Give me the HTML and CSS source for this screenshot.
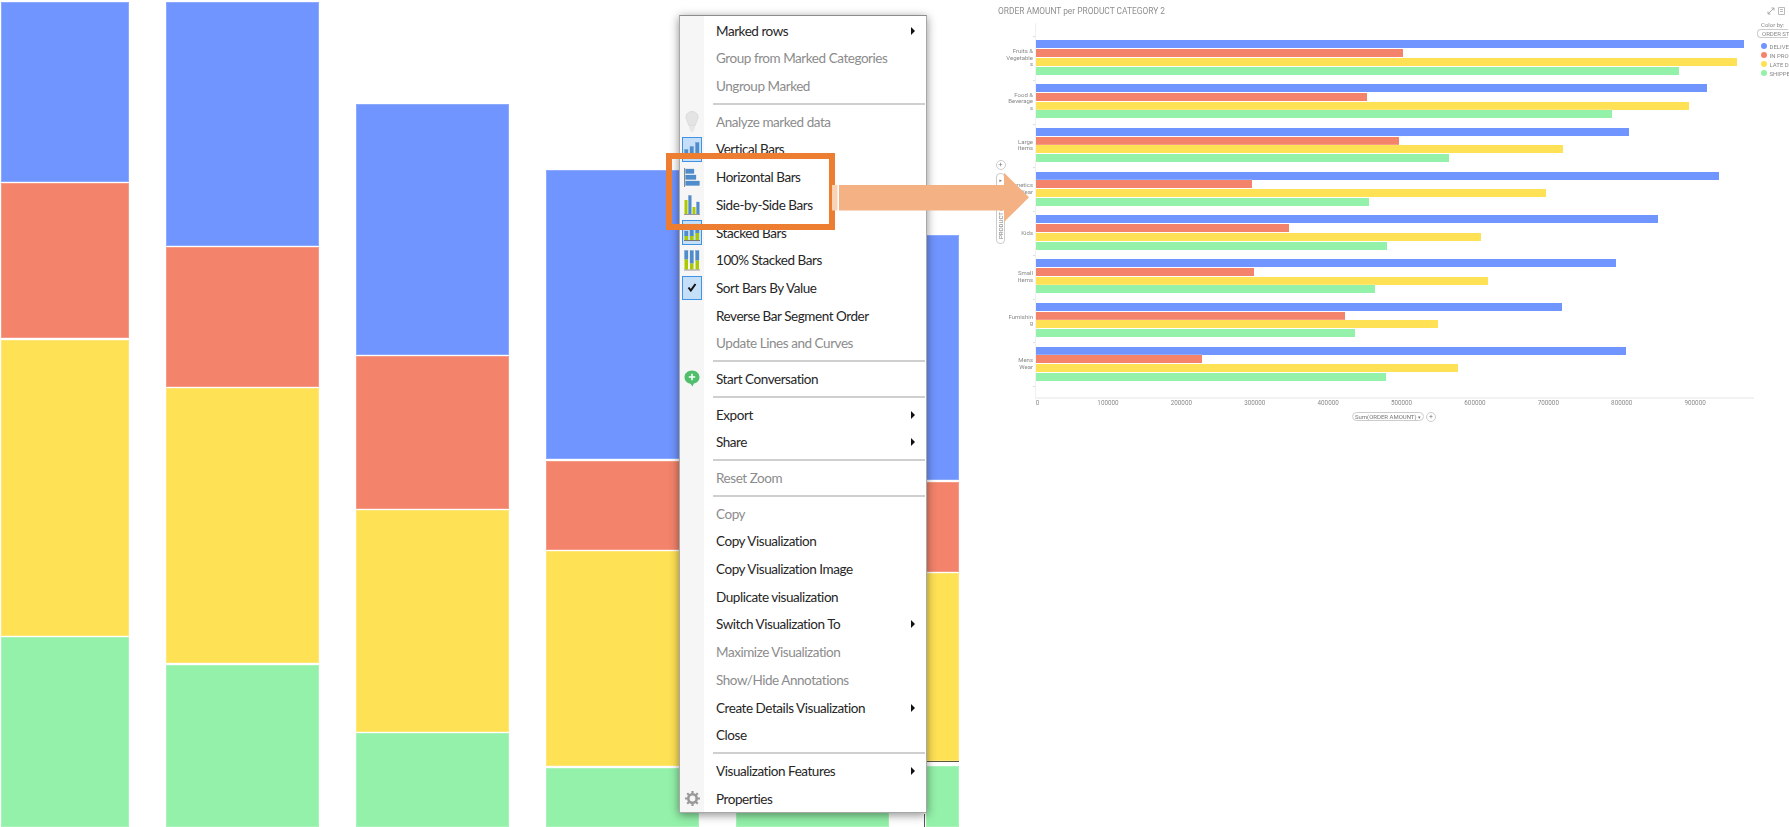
FILE: index.html
```html
<!DOCTYPE html>
<html lang="en">
<head>
  <meta charset="UTF-8" />
  <title>Bar chart menu</title>
  <link rel="stylesheet" href="styles.css">
</head>
<body>

  <div class="page">

    <!-- stacked columns on the left -->
    <div class="columns">
      <div class="col col-1">
        <div class="seg blue" style="height:179.5px"></div>
        <div class="seg red" style="height:155px"></div>
        <div class="seg yellow" style="height:296px"></div>
        <div class="seg green" style="height:189.5px"></div>
      </div>
      <div class="col col-n">
        <div class="seg blue" style="height:243.5px"></div>
        <div class="seg red" style="height:139.5px"></div>
        <div class="seg yellow" style="height:275px"></div>
        <div class="seg green" style="height:162px"></div>
      </div>
      <div class="col col-n">
        <div class="seg blue" style="height:251px"></div>
        <div class="seg red" style="height:152.5px"></div>
        <div class="seg yellow" style="height:221.5px"></div>
        <div class="seg green" style="height:93.5px"></div>
      </div>
      <div class="col col-n">
        <div class="seg blue" style="height:289px"></div>
        <div class="seg red" style="height:89px"></div>
        <div class="seg yellow" style="height:215px"></div>
        <div class="seg green" style="height:59px"></div>
      </div>
      <div class="col col-n">
        <div class="seg yellow" style="height:200px"></div>
        <div class="seg green" style="height:92px"></div>
      </div>
      <div class="col col-last">
        <div class="seg blue" style="height:245px"></div>
        <div class="seg red" style="height:90px"></div>
        <div class="seg yellow seg-marked" style="height:189px"></div>
        <div class="seg green" style="height:61px"></div>
      </div>
    </div>

    <!-- horizontal bars on the right -->
    <div class="chart">
      <div class="chart-head">
        <div class="chart-title">ORDER AMOUNT per PRODUCT CATEGORY 2</div>
        <div class="chart-tools">
          <svg width="8" height="8" viewBox="0 0 8 8"><path d="M1 7 7 1M4.5 1H7V3.5M1 4.5V7H3.5" fill="none" stroke="#aaa" stroke-width="1"/></svg>
          <svg width="7" height="8" viewBox="0 0 7 8"><path d="M.5.5H6.5V7.500H.5ZM2 2.500H5M2 4.500H5" fill="none" stroke="#bbb" stroke-width="1"/></svg>
        </div>
      </div>

      <div class="chart-body">
        <div class="y-control">
          <div class="round-btn">+</div>
          <div class="y-pill"><span>PRODUCT C</span><span class="y-caret">▾</span></div>
        </div>

        <div class="cats">
          <div class="cat">Fruits &amp;<br>Vegetable<br>s</div>
          <div class="cat">Food &amp;<br>Beverage<br>s</div>
          <div class="cat">Large<br>Items</div>
          <div class="cat">Cosmetics<br>Wear</div>
          <div class="cat">Kids</div>
          <div class="cat">Small<br>Items</div>
          <div class="cat">Furnishin<br>g</div>
          <div class="cat">Mens<br>Wear</div>
          <div class="cat-end"></div>
        </div>

        <div class="plot">
          <div class="group">
            <div class="bar blue" style="width:708px"></div>
            <div class="bar red" style="width:367px"></div>
            <div class="bar yellow" style="width:701px"></div>
            <div class="bar green" style="width:643px"></div>
          </div>
          <div class="group">
            <div class="bar blue" style="width:671px"></div>
            <div class="bar red" style="width:331px"></div>
            <div class="bar yellow" style="width:653px"></div>
            <div class="bar green" style="width:576px"></div>
          </div>
          <div class="group">
            <div class="bar blue" style="width:593px"></div>
            <div class="bar red" style="width:363px"></div>
            <div class="bar yellow" style="width:527px"></div>
            <div class="bar green" style="width:413px"></div>
          </div>
          <div class="group">
            <div class="bar blue" style="width:683px"></div>
            <div class="bar red" style="width:216px"></div>
            <div class="bar yellow" style="width:510px"></div>
            <div class="bar green" style="width:333px"></div>
          </div>
          <div class="group">
            <div class="bar blue" style="width:622px"></div>
            <div class="bar red" style="width:253px"></div>
            <div class="bar yellow" style="width:445px"></div>
            <div class="bar green" style="width:351px"></div>
          </div>
          <div class="group">
            <div class="bar blue" style="width:580px"></div>
            <div class="bar red" style="width:218px"></div>
            <div class="bar yellow" style="width:452px"></div>
            <div class="bar green" style="width:339px"></div>
          </div>
          <div class="group">
            <div class="bar blue" style="width:526px"></div>
            <div class="bar red" style="width:309px"></div>
            <div class="bar yellow" style="width:402px"></div>
            <div class="bar green" style="width:319px"></div>
          </div>
          <div class="group">
            <div class="bar blue" style="width:590px"></div>
            <div class="bar red" style="width:166px"></div>
            <div class="bar yellow" style="width:422px"></div>
            <div class="bar green" style="width:350px"></div>
          </div>
        </div>

        <div class="legend">
          <div class="legend-title">Color by:</div>
          <div class="legend-pill">ORDER ST.</div>
          <div class="legend-list">
            <div class="legend-item"><span class="dot blue"></span>DELIVE</div>
            <div class="legend-item"><span class="dot red"></span>IN PRO</div>
            <div class="legend-item"><span class="dot yellow"></span>LATE D</div>
            <div class="legend-item"><span class="dot green"></span>SHIPPE</div>
          </div>
        </div>
      </div>

      <div class="x-ticks">
        <span class="tick-zero">0</span><span>100000</span><span>200000</span><span>300000</span><span>400000</span><span>500000</span><span>600000</span><span>700000</span><span>800000</span><span>900000</span>
      </div>
      <div class="x-control">
        <div class="x-pill">Sum(ORDER AMOUNT) <span class="x-caret">▾</span></div>
        <div class="round-btn">+</div>
      </div>
    </div>
  </div>

  <!-- context menu -->
  <div class="menu">
    <div class="item"><span class="slot"></span><span class="label">Marked rows</span><span class="more"></span></div>
    <div class="item off"><span class="slot"></span><span class="label">Group from Marked Categories</span></div>
    <div class="item off"><span class="slot"></span><span class="label">Ungroup Marked</span></div>
    <div class="sep"></div>
    <div class="item off">
      <span class="slot">
        <svg width="14" height="21" viewBox="0 0 14 21"><path d="M7 .5C3.200.5 1 3.200 1 6.200c0 3 2.200 4.800 2.800 8.300h6.400C10.800 11 13 9.200 13 6.200 13 3.200 10.800.5 7 .5Z" fill="#e4e4e4" stroke="#dcdcdc"/><path d="M4 16h6M4.500 18h5M5.500 20h3" stroke="#d8d8d8" stroke-width="1.200"/></svg>
      </span>
      <span class="label">Analyze marked data</span>
    </div>
    <div class="item">
      <span class="slot"><span class="picked">
        <svg width="16" height="14" viewBox="0 0 16 14"><g class="ic-blue"><rect x=".5" y="7.500" width="3.500" height="6"/><rect x="6" y="4.500" width="3.500" height="9"/><rect x="11.500" y=".5" width="3.500" height="13"/></g></svg>
      </span></span>
      <span class="label">Vertical Bars</span>
    </div>
    <div class="item">
      <span class="slot">
        <svg width="16" height="19" viewBox="0 0 16 19"><path d="M.5 0V19" stroke="#8a8a8a" stroke-width="1"/><g class="ic-blue"><rect x="1.500" y="1" width="8.500" height="4.500"/><rect x="1.500" y="7" width="10.500" height="4.500"/><rect x="1.500" y="13" width="14" height="4.500"/></g></svg>
      </span>
      <span class="label">Horizontal Bars</span>
    </div>
    <div class="item">
      <span class="slot">
        <svg width="16" height="20" viewBox="0 0 16 20"><rect class="ic-lime-bar" x=".5" y="5" width="3" height="14"/><g class="ic-blue"><rect x="4.500" y=".5" width="2.800" height="18.500"/><rect x="12.500" y="7" width="2.800" height="12"/></g><rect class="ic-lime-bar" x="8.500" y="12" width="3" height="7"/><path d="M0 19.500H16" stroke="#999" stroke-width="1"/></svg>
      </span>
      <span class="label">Side-by-Side Bars</span>
    </div>
    <div class="item">
      <span class="slot"><span class="picked">
        <svg width="16" height="16" viewBox="0 0 16 16"><g class="ic-blue"><rect x=".5" y="6" width="3.500" height="5"/><rect x="6" y="4" width="3.500" height="7"/><rect x="11.500" y="1" width="3.500" height="7"/></g><g class="ic-lime"><rect x=".5" y="11" width="3.500" height="4"/><rect x="6" y="11" width="3.500" height="4"/><rect x="11.500" y="8" width="3.500" height="7"/></g><path d="M0 15.500H16" stroke="#777" stroke-width="1"/></svg>
      </span></span>
      <span class="label">Stacked Bars</span>
    </div>
    <div class="item">
      <span class="slot">
        <svg width="16" height="21" viewBox="0 0 16 21"><g class="ic-blue"><rect x=".5" y=".5" width="3.500" height="9"/><rect x="6" y=".5" width="3.500" height="13"/><rect x="11.500" y=".5" width="3.500" height="10"/></g><g class="ic-lime"><rect x=".5" y="9.500" width="3.500" height="10"/><rect x="6" y="13.500" width="3.500" height="6"/><rect x="11.500" y="10.500" width="3.500" height="9"/></g><path d="M0 20H16" stroke="#999" stroke-width="1"/></svg>
      </span>
      <span class="label">100% Stacked Bars</span>
    </div>
    <div class="item">
      <span class="slot"><span class="picked">
        <svg width="10" height="9" viewBox="0 0 10 9"><path d="M1.500 4.500 3.800 7.500 8.500 1" fill="none" stroke="#111" stroke-width="2"/></svg>
      </span></span>
      <span class="label">Sort Bars By Value</span>
    </div>
    <div class="item"><span class="slot"></span><span class="label">Reverse Bar Segment Order</span></div>
    <div class="item off"><span class="slot"></span><span class="label">Update Lines and Curves</span></div>
    <div class="sep"></div>
    <div class="item">
      <span class="slot">
        <svg width="16" height="17" viewBox="0 0 16 17"><path d="M8 .5C3.800.5.500 3.300.5 7.200c0 3.600 2.900 6.200 6 6.500L8.500 16.500l1.300-3C13 12.900 15.500 10.500 15.500 7.200 15.500 3.300 12.200.5 8 .5Z" fill="#4fbf6b"/><path d="M8 3.800V10.200M4.800 7H11.200" stroke="#fff" stroke-width="1.500"/></svg>
      </span>
      <span class="label">Start Conversation</span>
    </div>
    <div class="sep"></div>
    <div class="item"><span class="slot"></span><span class="label">Export</span><span class="more"></span></div>
    <div class="item"><span class="slot"></span><span class="label">Share</span><span class="more"></span></div>
    <div class="sep"></div>
    <div class="item off"><span class="slot"></span><span class="label">Reset Zoom</span></div>
    <div class="sep"></div>
    <div class="item off"><span class="slot"></span><span class="label">Copy</span></div>
    <div class="item"><span class="slot"></span><span class="label">Copy Visualization</span></div>
    <div class="item"><span class="slot"></span><span class="label">Copy Visualization Image</span></div>
    <div class="item"><span class="slot"></span><span class="label">Duplicate visualization</span></div>
    <div class="item"><span class="slot"></span><span class="label">Switch Visualization To</span><span class="more"></span></div>
    <div class="item off"><span class="slot"></span><span class="label">Maximize Visualization</span></div>
    <div class="item off"><span class="slot"></span><span class="label">Show/Hide Annotations</span></div>
    <div class="item"><span class="slot"></span><span class="label">Create Details Visualization</span><span class="more"></span></div>
    <div class="item"><span class="slot"></span><span class="label">Close</span></div>
    <div class="sep"></div>
    <div class="item"><span class="slot"></span><span class="label">Visualization Features</span><span class="more"></span></div>
    <div class="item">
      <span class="slot">
        <svg width="15" height="15" viewBox="0 0 15 15"><circle cx="7.500" cy="7.500" r="4.200" fill="none" stroke="#999" stroke-width="2.600"/><path d="M7.500 0V3M7.500 12V15M0 7.500H3M12 7.500H15M2.200 2.200 4.300 4.300M10.700 10.700 12.800 12.800M2.200 12.800 4.300 10.700M10.700 4.300 12.800 2.200" stroke="#999" stroke-width="2.200"/></svg>
      </span>
      <span class="label">Properties</span>
    </div>
  </div>

  <!-- callout on top -->
  <div class="callout-box"></div>
  <svg class="callout-arrow" width="198" height="51" viewBox="0 0 198 51">
    <rect x="0" y="13" width="5.500" height="25.500" fill="#f9d3b6"/>
    <path d="M7 13H172V.7L197 25.300 172 50V38.500H7Z" fill="#f4b183"/>
  </svg>

</body>
</html>
```

FILE: styles.css
```css
body {
  margin: 0;
  background-color: #ffffff;
  font-family: 'Roboto', sans-serif;
}
.page {
  display: flex;
  width: 1789px;
  height: 827px;
  overflow: hidden;
}

.blue { background-color: #7095ff; }
.red { background-color: #f3836a; }
.yellow { background-color: #ffe155; }
.green { background-color: #93f1a9; }

/* stacked columns */
.columns {
  display: flex;
  align-items: flex-end;
  gap: 37px;
  width: 959px;
  height: 826.500px;
  padding-left: 1px;
  box-sizing: border-box;
}
.col {
  display: flex;
  flex-direction: column;
  gap: 1.500px;
  flex: none;
  position: relative;
}
.col-1 { width: 128px; }
.col-n { width: 153px; }
.col-last { width: 33px; }
.col-last::before {
  content: "";
  position: absolute;
  left: -2px;
  bottom: 0;
  width: 1px;
  height: 13px;
  background-color: #555;
}
.seg { box-shadow: inset 0 0 0 1px rgba(255, 255, 255, 0.2); }
.seg-marked {
  margin-bottom: 2px;
  border-bottom: 1.500px solid #5a5a40;
  box-sizing: border-box;
}

/* right chart */
.chart {
  flex: 1;
  min-width: 0;
  color: #8a8a8a;
  filter: blur(0.35px);
}
.chart-head {
  display: flex;
  justify-content: space-between;
  align-items: center;
  height: 21px;
  padding: 0 4px 0 39px;
}
.chart-title {
  font-size: 8.400px;
  color: #8f8f8f;
}
.chart-tools {
  display: flex;
  align-items: center;
  gap: 3px;
}
.chart-body {
  display: flex;
  align-items: flex-start;
}
.y-control {
  display: flex;
  flex-direction: column;
  align-items: center;
  gap: 2.500px;
  width: 9px;
  margin-left: 37px;
  padding-top: 139px;
}
.round-btn {
  display: flex;
  align-items: center;
  justify-content: center;
  flex: none;
  width: 8px;
  height: 8px;
  border: 0.500px solid #ccc;
  border-radius: 50%;
  font-size: 7px;
  color: #777;
}
.y-pill {
  display: flex;
  justify-content: space-between;
  align-items: center;
  writing-mode: vertical-rl;
  transform: rotate(180deg);
  box-sizing: border-box;
  width: 9px;
  height: 71px;
  padding: 4px 0;
  border: 0.500px solid #ccc;
  border-radius: 4px;
  font-size: 6px;
  color: #777;
}
.y-caret { transform: rotate(90deg); font-size: 5px; }
.cats {
  width: 28px;
  padding-top: 15px;
}
.cat {
  display: flex;
  align-items: center;
  justify-content: flex-end;
  position: relative;
  height: 43.750px;
  font-size: 6px;
  line-height: 6.700px;
  text-align: right;
  color: #888;
}
.cat::after, .cat-end::after {
  content: "";
  position: absolute;
  right: -2px;
  top: 0;
  width: 2px;
  height: 1px;
  background-color: #ddd;
}
.cat-end { position: relative; height: 0; }
.plot {
  width: 718px;
  margin: 2px 0 0 2px;
  padding: 12.600px 0 11.500px;
  border-left: 1px solid #f0f0f0;
  border-bottom: 2px solid #f2f2f2;
}
.group {
  display: flex;
  flex-direction: column;
  justify-content: center;
  gap: 0.750px;
  height: 43.750px;
}
.bar {
  height: 8px;
  box-shadow: 0 0 0 0.500px rgba(255, 255, 255, 0.4);
}
.legend {
  width: 31px;
  margin-left: 3px;
  font-size: 6px;
  white-space: nowrap;
  color: #888;
}
.legend-title {
  height: 8px;
  line-height: 8px;
  padding-left: 4px;
}
.legend-pill {
  box-sizing: border-box;
  height: 8.500px;
  line-height: 7.500px;
  padding-left: 4px;
  border: 0.500px solid #ccc;
  border-right: none;
  border-radius: 4px 0 0 4px;
}
.legend-list { margin-top: 4px; }
.legend-item {
  display: flex;
  align-items: center;
  gap: 2.500px;
  height: 9px;
  padding-left: 4px;
}
.dot {
  flex: none;
  width: 6px;
  height: 6px;
  border-radius: 50%;
}
.x-ticks {
  display: flex;
  height: 8px;
  margin-left: 38.900px;
  font-size: 6.300px;
  line-height: 8px;
  color: #8a8a8a;
}
.x-ticks span {
  flex: none;
  width: 73.400px;
  text-align: center;
}
.x-ticks .tick-zero { box-sizing: border-box; padding-left: 6px; }
.x-control {
  display: flex;
  align-items: center;
  gap: 2px;
  margin: 4.500px 0 0 393px;
}
.x-pill {
  box-sizing: border-box;
  width: 72px;
  height: 9px;
  line-height: 8px;
  text-align: center;
  border: 0.500px solid #ccc;
  border-radius: 5px;
  font-size: 6px;
  color: #777;
  white-space: nowrap;
}
.x-caret { font-size: 5px; }

/* context menu */
.menu {
  position: absolute;
  left: 679px;
  top: 15px;
  box-sizing: border-box;
  width: 248px;
  height: 798px;
  padding-top: 0.850px;
  border: 1px solid #a8a8a8;
  border-top-color: #8c8c8c;
  background: linear-gradient(90deg, #f6f6f6 24px, #ffffff 24px);
  box-shadow: 0 2px 9px rgba(0, 0, 0, 0.45);
  font-family: 'Lato', sans-serif;
  font-size: 13.500px;
  letter-spacing: -0.450px;
  color: #262626;
}
.item {
  display: flex;
  align-items: center;
  height: 27.700px;
}
.item.off { color: #8c8c8c; }
.slot {
  display: flex;
  align-items: center;
  justify-content: center;
  flex: none;
  width: 24px;
  height: 100%;
}
.label {
  flex: 1;
  margin-left: 12px;
  white-space: nowrap;
}
.more {
  flex: none;
  width: 0;
  height: 0;
  margin-right: 11px;
  border-left: 4.500px solid #111;
  border-top: 4.500px solid transparent;
  border-bottom: 4.500px solid transparent;
}
.sep {
  display: flex;
  align-items: center;
  height: 8px;
  margin: 0 1px 0 33px;
}
.sep::before {
  content: "";
  flex: 1;
  height: 2px;
  background-color: #cfcfcf;
}
.picked {
  display: flex;
  align-items: center;
  justify-content: center;
  box-sizing: border-box;
  width: 20px;
  height: 24.700px;
  border: 1.500px solid #3f92e6;
  background-color: #c6dff8;
}
.ic-blue rect { fill: #4f8ccb; stroke: #5b8fc4; stroke-width: 0.300; }
.ic-lime rect, .ic-lime-bar { fill: #abc900; }

/* orange callout */
.callout-box {
  position: absolute;
  left: 666px;
  top: 153px;
  box-sizing: border-box;
  width: 169px;
  height: 76.500px;
  border: 6px solid #ed7d31;
}
.callout-arrow {
  position: absolute;
  left: 832px;
  top: 172px;
}
```
